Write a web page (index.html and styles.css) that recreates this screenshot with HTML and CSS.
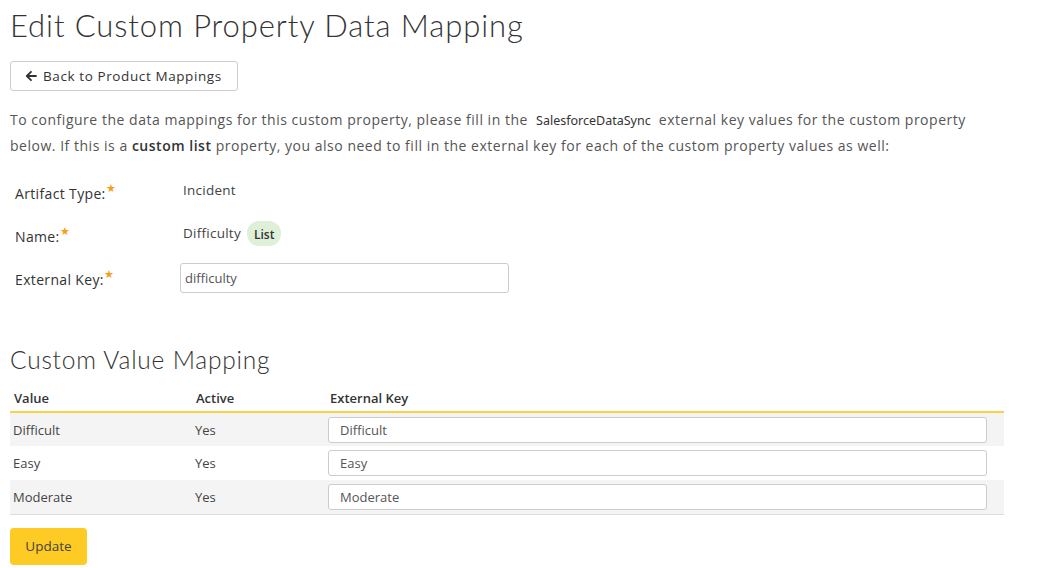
FILE: index.html
```html
<!DOCTYPE html>
<html>
<head>
<meta charset="utf-8">
<link rel="stylesheet" href="styles.css">
</head>
<body>
<div class="page">
  <h1 class="title">Edit Custom Property Data Mapping</h1>
  <button class="btn-back" type="button"><svg class="arrow" width="12" height="12" viewBox="0 0 12 12"><path d="M11 6H2M6 1.8L1.8 6 6 10.2" fill="none" stroke="#333" stroke-width="1.8" stroke-linecap="round" stroke-linejoin="round"/></svg>Back to Product Mappings</button>
  <p class="intro">To configure the data mappings for this custom property, please fill in the <span class="code">SalesforceDataSync</span> external key values for the custom property below. If this is a <b>custom list</b> property, you also need to fill in the external key for each of the custom property values as well:</p>

  <div class="form">
    <div class="row">
      <div class="label">Artifact Type:<span class="req">★</span></div>
      <div class="value">Incident</div>
    </div>
    <div class="row">
      <div class="label">Name:<span class="req">★</span></div>
      <div class="value">Difficulty <span class="badge">List</span></div>
    </div>
    <div class="row row-input">
      <div class="label">External Key:<span class="req">★</span></div>
      <div class="value"><input class="text main-input" type="text" value="difficulty"></div>
    </div>
  </div>

  <h2 class="subtitle">Custom Value Mapping</h2>
  <table class="grid">
    <thead>
      <tr><th class="c1">Value</th><th class="c2">Active</th><th class="c3">External Key</th></tr>
    </thead>
    <tbody>
      <tr class="alt"><td>Difficult</td><td>Yes</td><td><input class="text cell-input" type="text" value="Difficult"></td></tr>
      <tr><td>Easy</td><td>Yes</td><td><input class="text cell-input" type="text" value="Easy"></td></tr>
      <tr class="alt"><td>Moderate</td><td>Yes</td><td><input class="text cell-input" type="text" value="Moderate"></td></tr>
    </tbody>
  </table>
  <button class="btn-update" type="button">Update</button>
</div>
</body>
</html>
```
FILE: styles.css
```css
html, body {
  margin: 0;
  padding: 0;
  background: #fff;
}
body {
  font-family: "Open Sans", "Noto Sans", sans-serif;
  font-size: 13px;
  color: #555;
}
.page {
  padding: 0 10px;
  width: 994px;
}
.title {
  margin: 0;
  padding-top: 7px;
  font-family: "Lato", sans-serif;
  font-weight: 300;
  font-size: 31px;
  line-height: 36px;
  color: #333;
  letter-spacing: 0.9px;
}
.btn-back {
  margin-top: 18px;
  height: 30px;
  width: 228px;
  background: #fff;
  border: 1px solid #ccc;
  border-radius: 3px;
  font-family: "Open Sans", sans-serif;
  font-size: 13.5px;
  letter-spacing: 0.6px;
  color: #333;
  padding: 0 0 0 14px;
  display: flex;
  align-items: center;
  gap: 6px;
}
.arrow { display: block; }
.intro {
  margin: 16px 0 0 0;
  font-size: 14px;
  letter-spacing: 0.52px;
  line-height: 25px;
  color: #555;
}
.intro .code {
  font-family: "Noto Sans", sans-serif;
  font-size: 12.5px;
  letter-spacing: 0;
  color: #333;
  padding: 0 4px;
}
.intro b {
  font-weight: 600;
  color: #333;
}
.form {
  margin-top: 18px;
  display: flex;
  flex-direction: column;
}
.row {
  display: flex;
  height: 43px;
}
.row-input { height: 40px; }
.label {
  width: 168px;
  padding-left: 5px;
  padding-top: 8px;
  color: #333;
  font-size: 14px;
  letter-spacing: 0.35px;
}
.req {
  color: #f59e1b;
  font-size: 11px;
  position: relative;
  top: -7px;
  margin-left: 0;
}
.value {
  padding-top: 5px;
  color: #444;
  font-size: 13.5px;
  letter-spacing: 0.25px;
  display: flex;
  align-items: flex-start;
  gap: 6px;
}
.badge {
  display: inline-block;
  background: #dff0d8;
  color: #333;
  border-radius: 12px;
  padding: 0 7px;
  height: 25px;
  line-height: 27px;
  font-size: 12px;
  font-weight: 600;
  letter-spacing: 0;
  margin-top: -3px;
}
.text {
  box-sizing: border-box;
  border: 1px solid #ccc;
  border-radius: 3px;
  background: #fff;
  font-family: "Open Sans", sans-serif;
  font-size: 13px;
  color: #555;
  outline: none;
}
.main-input {
  width: 329px;
  height: 30px;
  padding: 0 4px;
  margin-left: -3px;
  margin-top: -4px;
}
.subtitle {
  margin: 42px 0 0 0;
  font-family: "Lato", sans-serif;
  font-weight: 300;
  font-size: 24.5px;
  line-height: 32px;
  color: #333;
  letter-spacing: 0.8px;
}
.grid {
  margin-top: 9px;
  width: 994px;
  border-collapse: collapse;
}
.grid th {
  text-align: left;
  font-weight: 600;
  font-size: 13px;
  color: #333;
  height: 22px;
  padding: 0 0 4px 4px;
  vertical-align: bottom;
  border-bottom: 2px solid #f8d24a;
}
.grid .c1 { width: 178px; }
.grid .c2 { width: 130px; }
.grid tbody tr { height: 34px; }
.grid td {
  padding: 0 0 0 3px;
  color: #444;
  vertical-align: middle;
}
.grid tr.alt td { background: #f4f4f4; }
.grid tbody tr:last-child td { border-bottom: 1px solid #ddd; }
.cell-input {
  width: 659px;
  height: 26px;
  padding: 0 11px;
  display: block;
  margin-left: -1px;
}
.btn-update {
  margin-top: 13px;
  width: 77px;
  height: 37px;
  background: #fdcb23;
  border: none;
  border-radius: 4px;
  font-family: "Open Sans", sans-serif;
  font-size: 13.5px;
  color: #444;
  padding: 0;
}
```
